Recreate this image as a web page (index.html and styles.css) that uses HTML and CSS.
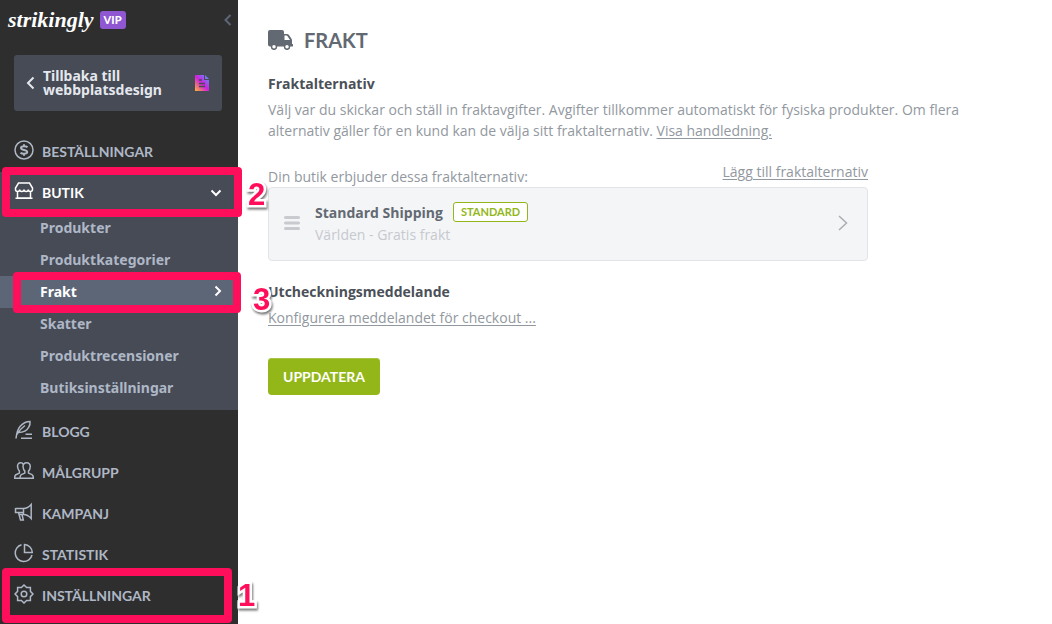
FILE: index.html
```html
<!DOCTYPE html>
<html lang="sv">
<head>
    <meta charset="utf-8">
    <title>Frakt</title>
    <link rel="stylesheet" href="styles.css">
</head>
<body>
    <aside class="sidebar">
        <div class="brand">
            <a href="#" class="logo">strikingly</a>
            <span class="vip">VIP</span>
            <button class="collapse" aria-label="Dölj meny">
                <svg width="8" height="12" viewBox="0 0 8 12"><path d="M6.500 1 1.500 6l5 5"/></svg>
            </button>
        </div>

        <a href="#" class="back">
            <svg class="back-arrow" width="9" height="14" viewBox="0 0 9 14"><path d="M7.500 1.500 2 7l5.500 5.500"/></svg>
            <span>Tillbaka till webbplatsdesign</span>
            <svg class="site-icon" width="14" height="16" viewBox="0 0 14 16">
                <defs>
                    <linearGradient id="site-fill" x1="0" y1="1" x2="1" y2="0">
                        <stop offset="0" stop-color="#ffb52e"/>
                        <stop offset=".5" stop-color="#d01fe0"/>
                        <stop offset="1" stop-color="#4aa5ff"/>
                    </linearGradient>
                </defs>
                <path fill="url(#site-fill)" d="M0 0h9v5h5v11H0zM10 0l4 4h-4z"/>
                <path stroke="#474b56" stroke-width="1.500" d="M4 5h3M4 8.500h6M4 11.500h6"/>
            </svg>
        </a>

        <nav>
            <ul class="menu">
                <li>
                    <a href="#" class="menu-item">
                        <svg class="icon" viewBox="0 0 20 20"><circle cx="10" cy="10" r="9"/><path stroke-width="2" d="M13.500 7.200C12.700 6.500 11.500 6.300 10 6.300c-1.900 0-3 .5-3 1.700 0 2.800 6.200 1.200 6.200 4 0 1.200-1.300 1.700-3.200 1.700-1.500 0-2.700-.3-3.500-1M10 4.200v2M10 13.800v2"/></svg>
                        Beställningar
                    </a>
                </li>
                <li class="open">
                    <a href="#" class="menu-item">
                        <svg class="icon" viewBox="0 0 20 20"><path d="M4.500 2h11L18.500 7v1.500c0 1.200-.9 2-2.100 2s-2.100-.8-2.100-2c0 1.200-.9 2-2.100 2s-2.200-.8-2.200-2c0 1.200-1 2-2.200 2s-2.100-.8-2.100-2c0 1.200-.9 2-2.100 2s-2.100-.8-2.100-2V7zM3.500 10.500V17h13v-6.500M1.500 17.200h17"/></svg>
                        Butik
                        <svg class="chevron" width="12" height="8" viewBox="0 0 12 8"><path d="m1.500 1.500 4.500 4.500 4.500-4.500"/></svg>
                        <span class="callout callout-shop"><b class="number">2</b></span>
                    </a>
                    <ul class="submenu">
                        <li><a href="#">Produkter</a></li>
                        <li><a href="#">Produktkategorier</a></li>
                        <li>
                            <a href="#" class="active">
                                Frakt
                                <svg class="chevron" width="8" height="12" viewBox="0 0 8 12"><path d="M1.500 1.500 6 6l-4.500 4.500"/></svg>
                                <span class="callout callout-shipping"><b class="number">3</b></span>
                            </a>
                        </li>
                        <li><a href="#">Skatter</a></li>
                        <li><a href="#">Produktrecensioner</a></li>
                        <li><a href="#">Butiksinställningar</a></li>
                    </ul>
                </li>
                <li>
                    <a href="#" class="menu-item">
                        <svg class="icon" viewBox="0 0 20 20"><path d="M2 18.500C2.500 14 3.500 9.500 6 6.500 8.500 3.500 12 1.500 16 1.500c.3 2.500-.2 4-1.200 5.500-1.600 3.500-4.300 5.500-10.800 5.500M3 14.500C5 10.500 7.500 8 11 5.500M11.500 14.200H18M7 18.200h11"/></svg>
                        Blogg
                    </a>
                </li>
                <li>
                    <a href="#" class="menu-item">
                        <svg class="icon" viewBox="0 0 20 20"><path d="M9.300 3.500C8.800 2.200 7.900 1.800 6.800 1.800c-2.300 0-3.500 1.500-3.200 4 .1 2 .9 3.400 1.800 4.300v2L1.500 14c-.6.500-.8 1.300-.8 3.200h5M12.600 1.800c-2.500 0-3.800 1.700-3.500 4.200.1 1.900.8 3.200 1.700 4.100v2l-3.500 1.500c-1 .5-1.300 1.500-1.300 3.600h13.300c0-2.100-.3-3.200-1.300-3.600l-3.500-1.500v-2c.9-.9 1.600-2.200 1.700-4.100.3-2.500-1.100-4.200-3.600-4.200z"/></svg>
                        Målgrupp
                    </a>
                </li>
                <li>
                    <a href="#" class="menu-item">
                        <svg class="icon" viewBox="0 0 20 20"><path d="M1.500 6.500h8c3 0 5.500-1.500 7.700-4v14c-2.200-2.500-4.700-4-7.700-4H5M1.500 6v4.500h8M17.200 2v15M9.500 6.500v6M4.500 10.500 6.500 18h2.800l-1.300-5.500"/></svg>
                        Kampanj
                    </a>
                </li>
                <li>
                    <a href="#" class="menu-item">
                        <svg class="icon" viewBox="0 0 20 20"><path d="M7.500 1.800A8.500 8.500 0 1 0 18 12M10.500 1.500v8h7.800a8.200 8.200 0 0 0-7.800-8z"/></svg>
                        Statistik
                    </a>
                </li>
                <li>
                    <a href="#" class="menu-item">
                        <svg class="icon" viewBox="0 0 20 20"><circle cx="10" cy="10" r="2.800"/><path d="M10 1 12.600 3.600 16.400 3.600V7.400L19 10l-2.600 2.600v3.800h-3.800L10 19l-2.600-2.600H3.600v-3.800L1 10l2.600-2.600V3.600h3.800z"/></svg>
                        Inställningar
                        <span class="callout callout-settings"><b class="number">1</b></span>
                    </a>
                </li>
            </ul>
        </nav>
    </aside>

    <main>
        <h1>
            <svg width="25" height="20" viewBox="0 0 25 20">
                <path fill="#636972" fill-rule="evenodd" d="M2 0h12q2 0 2 2v2h3q1 0 2 1l2 3q1 1 1 2.500V14h.5q.5 0 .5.600v1.400q0 .6-.6.600H2q-2 0-2-2V2Q0 0 2 0zM16.500 5.500V10h5.500L19.500 6.200Q19 5.500 18.500 5.500z"/>
                <circle cx="6" cy="16.800" r="2.500" fill="#fff" stroke="#636972" stroke-width="1.500"/>
                <circle cx="19" cy="16.800" r="2.500" fill="#fff" stroke="#636972" stroke-width="1.500"/>
            </svg>
            Frakt
        </h1>

        <section class="intro">
            <h2>Fraktalternativ</h2>
            <p>Välj var du skickar och ställ in fraktavgifter. Avgifter tillkommer automatiskt för fysiska produkter. Om flera alternativ gäller för en kund kan de välja sitt fraktalternativ. <a href="#">Visa handledning.</a></p>
        </section>

        <section class="options">
            <div class="options-head">
                <p>Din butik erbjuder dessa fraktalternativ:</p>
                <a href="#">Lägg till fraktalternativ</a>
            </div>
            <div class="option">
                <svg width="16" height="14" viewBox="0 0 16 14"><path stroke="#c8cacf" stroke-width="3" stroke-linecap="round" d="M1.500 1.500h13M1.500 7h13M1.500 12.500h13"/></svg>
                <div class="option-text">
                    <div class="option-name">Standard Shipping <span class="badge">Standard</span></div>
                    <div class="option-zone">Världen - Gratis frakt</div>
                </div>
                <svg width="10" height="16" viewBox="0 0 10 16"><path fill="none" stroke="#aaadb2" stroke-width="1.500" d="m1 1 7.500 7L1 15"/></svg>
            </div>
        </section>

        <section class="checkout">
            <h2>Utcheckningsmeddelande</h2>
            <a href="#">Konfigurera meddelandet för checkout ...</a>
        </section>

        <button class="update">Uppdatera</button>
    </main>
</body>
</html>
```
FILE: styles.css
```css
* {
    box-sizing: border-box;
}
body {
    margin: 0;
    display: flex;
    min-height: 100vh;
    font-family: "Open Sans", sans-serif;
    font-size: 14px;
    line-height: 21px;
    color: #9298a0;
    background-color: #fff;
}
h1, h2, p, ul {
    margin: 0;
    padding: 0;
}
ul {
    list-style: none;
}
button {
    border: none;
    cursor: pointer;
}

/* Sidebar */
.sidebar {
    flex: 0 0 238px;
    background-color: #2e2e2e;
}
.sidebar a {
    text-decoration: none;
}
.brand {
    display: flex;
    align-items: center;
    height: 39px;
    padding: 0 6px 0 8px;
}
.sidebar .logo {
    font-family: "Liberation Serif", serif;
    font-size: 22px;
    font-style: italic;
    font-weight: bold;
    color: #fff;
}
.vip {
    margin-left: 6px;
    padding: 0 4px;
    border-radius: 3px;
    background-color: #8f57d2;
    color: #fff;
    font-family: Lato, sans-serif;
    font-size: 11px;
    font-weight: 900;
    line-height: 18px;
}
.collapse {
    display: flex;
    margin-left: auto;
    padding: 0;
    background: none;
}
.collapse svg {
    fill: none;
    stroke: #5d6677;
    stroke-width: 2;
}
.back {
    display: flex;
    align-items: center;
    height: 56px;
    margin: 16px 16px 20px 14px;
    padding: 0 13px 0 12px;
    border-radius: 3px;
    background-color: #474b56;
    color: #e4e8ee;
    font-family: "Noto Sans", sans-serif;
    font-weight: bold;
    line-height: 14px;
}
.back span {
    flex: 1;
    margin: 0 8px;
}
.back-arrow {
    fill: none;
    stroke: #e4e8ee;
    stroke-width: 2;
}

/* Menu */
.menu-item {
    position: relative;
    display: flex;
    align-items: center;
    height: 41px;
    padding: 0 16px 0 14px;
    color: #aeb7c6;
    font-family: Lato, sans-serif;
    font-weight: bold;
    text-transform: uppercase;
}
.icon {
    width: 20px;
    height: 20px;
    margin: 0 8px 4px 0;
    fill: none;
    stroke: currentColor;
    stroke-width: 1.5;
}
.chevron {
    margin-left: auto;
    fill: none;
    stroke: #fff;
    stroke-width: 2;
}
.open {
    margin-bottom: 1px;
    padding-bottom: 6px;
    background-color: #474b56;
}
.open .menu-item {
    height: 40px;
    padding-top: 1px;
    color: #fff;
}
.submenu a {
    position: relative;
    display: flex;
    align-items: center;
    height: 32px;
    padding: 0 16px 2px 40px;
    color: #aeb7c6;
    font-family: "Noto Sans", sans-serif;
    font-weight: bold;
}
.submenu .active {
    background-color: #5d6677;
    color: #fff;
}

/* Numbered frames drawn over the menu */
.callout {
    position: absolute;
    z-index: 1;
    border: 8px solid #ff0f5b;
    border-radius: 4px;
}
.callout-shop {
    inset: -5px -4px -5px 2px;
}
.callout-shipping {
    inset: -4px -3px -5px 13px;
}
.callout-settings {
    inset: -7px 6px -7px 2px;
}
.number {
    position: absolute;
    top: 4px;
    left: 100%;
    margin-left: 14px;
    color: #ff0f5b;
    font-family: "Liberation Sans", sans-serif;
    font-size: 31px;
    line-height: 32px;
    -webkit-text-stroke: 5px #fff;
    paint-order: stroke fill;
    filter: drop-shadow(1px 2px 1px #777);
}
.callout-shipping .number {
    margin-left: 20px;
}

/* Content */
main {
    flex: 1;
    padding: 28px 30px;
}
main a {
    color: inherit;
    text-decoration: underline;
    text-underline-offset: 2px;
}
h1 {
    display: flex;
    align-items: center;
    gap: 11px;
    color: #636972;
    font-family: Lato, sans-serif;
    font-size: 20px;
    line-height: 24px;
    text-transform: uppercase;
}
h2 {
    color: #4b5058;
    font-size: 14px;
    line-height: 21px;
}
.intro {
    max-width: 700px;
    margin-top: 21px;
}
.intro p {
    margin-top: 5px;
}
.options {
    max-width: 600px;
    margin-top: 20px;
}
.options-head {
    display: flex;
    justify-content: space-between;
    align-items: flex-start;
}
.options-head p {
    padding-top: 5px;
}
.option {
    display: flex;
    align-items: center;
    height: 74px;
    padding: 0 19px 2px 15px;
    border: 1px solid #e2e4e7;
    border-radius: 4px;
    background-color: #f4f5f7;
}
.option-text {
    flex: 1;
    margin-left: 15px;
}
.option-name {
    display: flex;
    align-items: center;
    gap: 10px;
    color: #636972;
    font-weight: bold;
}
.option-zone {
    margin-top: 1px;
    color: #c6c9ce;
}
.badge {
    padding: 0 7px;
    border: 1px solid #93b719;
    border-radius: 3px;
    background-color: #fff;
    color: #93b719;
    font-family: Lato, sans-serif;
    font-size: 11px;
    line-height: 18px;
    text-transform: uppercase;
}
.checkout {
    margin-top: 20px;
}
.checkout a {
    display: inline-block;
    margin-top: 5px;
}
.update {
    height: 37px;
    margin-top: 30px;
    padding: 0 15px;
    border-radius: 4px;
    background-color: #93b719;
    box-shadow: inset 0 1px #a9c547;
    color: #fff;
    font-family: Lato, sans-serif;
    font-size: 14px;
    font-weight: bold;
    text-transform: uppercase;
}
```
